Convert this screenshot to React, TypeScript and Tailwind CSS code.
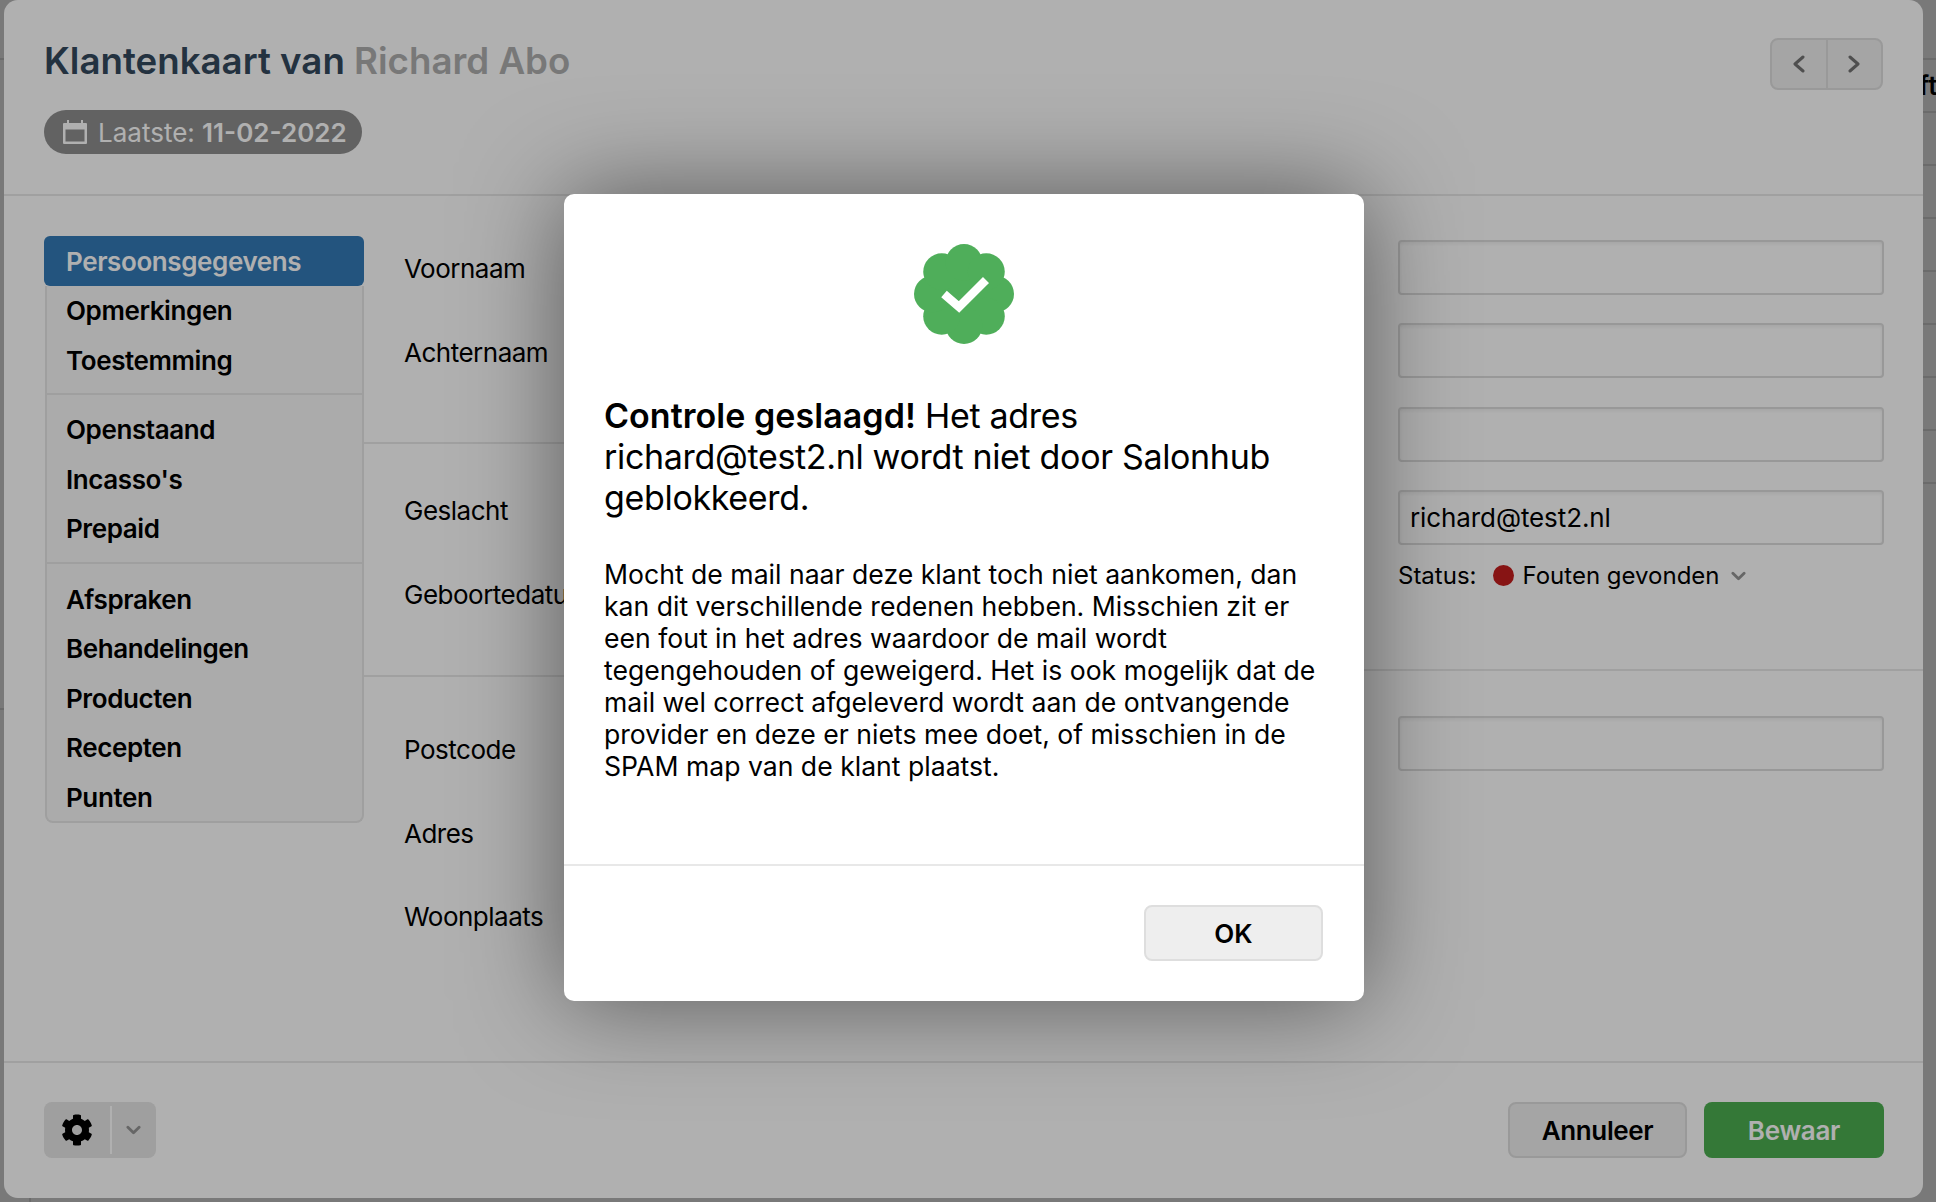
import React from 'react';
import { FaCog } from 'react-icons/fa';

const Chevron = ({ className }: { className?: string }) => (
  <svg viewBox="0 0 16 10" className={className} fill="none" stroke="currentColor" strokeWidth="3" strokeLinecap="round" strokeLinejoin="round">
    <path d="M2 2l6 6 6-6" />
  </svg>
);

const CalendarIcon = () => (
  <svg viewBox="0 0 24 24" className="h-6 w-6 text-white" fill="currentColor">
    <path d="M1 3h3V0h2v3h12V0h2v3h3a1 1 0 0 1 1 1v19a1 1 0 0 1-1 1H1a1 1 0 0 1-1-1V4a1 1 0 0 1 1-1zm1.500 6.500V21.500h19V9.500z" fillRule="evenodd" />
  </svg>
);

const Badge = () => {
  const lobes = [0, 45, 90, 135, 180, 225, 270, 315];
  return (
    <svg viewBox="-50 -50 100 100" className="h-[100px] w-[100px]">
      <g fill="#4fae5a">
        <circle r="36" />
        {lobes.map((a) => (
          <circle key={a} r="18.500" cx={31.5 * Math.cos((a * Math.PI) / 180)} cy={31.5 * Math.sin((a * Math.PI) / 180)} />
        ))}
      </g>
      <path d="M-20 0L-5 13L22 -14" fill="none" stroke="#fff" strokeWidth="8.500" />
    </svg>
  );
};

const NavItem = ({ label }: { label: string }) => (
  <div className="flex h-[49.5px] items-center px-[19px] text-[26px] font-semibold tracking-[-0.4px] text-black">{label}</div>
);

const Sidebar = () => (
  <div className="w-[320px] shrink-0">
    <div className="flex h-[50px] items-center rounded-[6px] bg-[#337ab7] px-[22px] text-[26px] font-semibold tracking-[-0.4px] text-white">Persoonsgegevens</div>
    <div className="ml-[1px] rounded-b-[8px] border-x-2 border-b-2 border-[#e6e6e6] bg-[#f8f8f8]">
      <div className="border-b-2 border-[#e6e6e6] pb-[8px]">
        <NavItem label="Opmerkingen" />
        <NavItem label="Toestemming" />
      </div>
      <div className="border-b-2 border-[#e6e6e6] pt-[10px] pb-[8px]">
        <NavItem label="Openstaand" />
        <NavItem label="Incasso's" />
        <NavItem label="Prepaid" />
      </div>
      <div className="h-[257px] pt-[11px]">
        <NavItem label="Afspraken" />
        <NavItem label="Behandelingen" />
        <NavItem label="Producten" />
        <NavItem label="Recepten" />
        <NavItem label="Punten" />
      </div>
    </div>
  </div>
);

const Label = ({ children }: { children: string }) => (
  <div className="flex h-[83.500px] items-center whitespace-nowrap pl-[40px] text-[26px] tracking-[-0.5px] text-black">{children}</div>
);

const Input = ({ value }: { value?: string }) => (
  <div className="flex h-[55px] items-center rounded-[4px] border-2 border-[#dcdcdc] px-[10px] text-[26px] tracking-[-0.1px] text-black shadow-[inset_0_2px_3px_rgba(0,0,0,0.06)]">
    {value}
  </div>
);

export default function App() {
  return (
    <div className="relative h-[1202px] w-[1936px] overflow-hidden bg-white font-[Inter,sans-serif] antialiased">
      {/* pagina achter de klantenkaart, alleen de randjes zijn zichtbaar */}
      <div className="flex h-full justify-between">
        <div className="flex w-[31px] flex-col">
          <div className="mt-[58px] h-[2px] w-full bg-[#e3e3e3]" />
          <div className="mt-[648px] h-[2px] w-full bg-[#e3e3e3]" />
          <div className="mt-auto ml-[29px] h-[5px] w-[2px] bg-[#e3e3e3]" />
        </div>
        <div className="flex w-[13px] flex-col overflow-hidden pt-[58px]">
          {Array.from({ length: 9 }).map((_, i) => (
            <div key={i} className="h-[53px] shrink-0 border-t-2 border-[#e3e3e3]">
              {i === 0 && <div className="-ml-[4px] whitespace-nowrap pt-[8px] text-[26px] leading-[36px] font-semibold text-black">ft</div>}
            </div>
          ))}
        </div>
      </div>
      <div className="absolute inset-0 bg-black/[0.31]" />

      {/* klantenkaart */}
      <div className="absolute top-0 left-[4px] flex h-[1198px] w-[1919px] flex-col rounded-[14px] bg-white">
        <div className="flex h-[196px] shrink-0 justify-between border-b-2 border-[#e8e8e8] pr-[40px] pl-[40px]">
          <div>
            <h1 className="pt-[39px] text-[36.7px] leading-[44px] font-semibold text-[#34495e]">
              Klantenkaart van <span className="text-[#aeaeae]">Richard Abo</span>
            </h1>
            <div className="mt-[27px] flex h-[44px] w-[318px] items-center gap-[11px] rounded-full bg-[#8e8e8e] pl-[19px] text-[26px] text-white">
              <CalendarIcon />
              <span>
                Laatste: <span className="font-semibold">11-02-2022</span>
              </span>
            </div>
          </div>
          <div className="mt-[38px] flex h-[52px] w-[113px] rounded-[8px] border-2 border-[#dedede] bg-[#efefef] text-[#737373]">
            <div className="flex flex-1 items-center justify-center border-r-2 border-[#dedede]">
              <svg viewBox="0 0 12 18" className="h-[18px] w-[12px]" fill="none" stroke="currentColor" strokeWidth="3" strokeLinecap="round" strokeLinejoin="round">
                <path d="M10 2L2 9l8 7" />
              </svg>
            </div>
            <div className="flex flex-1 items-center justify-center">
              <svg viewBox="0 0 12 18" className="h-[18px] w-[12px]" fill="none" stroke="currentColor" strokeWidth="3" strokeLinecap="round" strokeLinejoin="round">
                <path d="M2 2l8 7-8 7" />
              </svg>
            </div>
          </div>
        </div>

        <div className="flex flex-1 pl-[40px]">
          <div className="pt-[40px]">
            <Sidebar />
          </div>
          <div className="w-[600px] shrink-0 overflow-hidden">
            <div className="h-[248px] border-b-2 border-[#e8e8e8] pt-[31px]">
              <Label>Voornaam</Label>
              <Label>Achternaam</Label>
            </div>
            <div className="h-[233px] border-b-2 border-[#e8e8e8] pt-[25px]">
              <Label>Geslacht</Label>
              <Label>Geboortedatum</Label>
            </div>
            <div className="pt-[31px]">
              <Label>Postcode</Label>
              <Label>Adres</Label>
              <Label>Woonplaats</Label>
            </div>
          </div>
          <div className="flex-1">
            <div className="h-[475px] border-b-2 border-[#e8e8e8] pt-[44px] pr-[39.5px] pl-[434px]">
              <div className="flex flex-col gap-[28.33px]">
                <Input />
                <Input />
                <Input />
                <Input value="richard@test2.nl" />
              </div>
              <div className="mt-[17px] flex h-[28px] items-center text-[24px] text-black">
                <span>Status:</span>
                <span className="ml-[17px] h-[21px] w-[21px] rounded-full bg-[#c41e1e]" />
                <span className="ml-[8px]">Fouten gevonden</span>
                <Chevron className="ml-[11px] h-[10px] w-[15px] text-[#949494]" />
              </div>
            </div>
            <div className="pt-[45px] pr-[39.5px] pl-[434px]">
              <Input />
            </div>
          </div>
        </div>

        <div className="flex h-[137px] shrink-0 justify-between border-t-2 border-[#e8e8e8] pt-[39px] pr-[39px] pl-[40px]">
          <div className="flex h-[56px] w-[112px] items-center rounded-[8px] bg-[#e6e6e6]">
            <div className="flex w-[66px] justify-center">
              <FaCog className="h-[32px] w-[32px] text-black" />
            </div>
            <div className="h-[48px] w-[2px] bg-white" />
            <Chevron className="ml-[14px] h-[10px] w-[15px] text-[#949494]" />
          </div>
          <div className="flex gap-[17px]">
            <button className="h-[56px] w-[179px] rounded-[8px] border-2 border-[#dedede] bg-[#efefef] text-[26px] font-semibold tracking-[-0.4px] text-black">Annuleer</button>
            <button className="h-[56px] w-[180px] rounded-[8px] bg-[#4caf50] text-[26px] font-semibold tracking-[-0.3px] text-white">Bewaar</button>
          </div>
        </div>
      </div>
      <div className="absolute inset-0 bg-black/[0.31]" />

      {/* melding */}
      <div className="absolute top-[194px] left-[564px] flex h-[807px] w-[800px] flex-col rounded-[10px] bg-white shadow-[0_0_100px_rgba(0,0,0,0.5)]">
        <div className="flex-1 px-[40px] pt-[50px]">
          <div className="flex justify-center">
            <Badge />
          </div>
          <p className="mt-[51px] text-[34px] leading-[41px] tracking-[-0.33px] text-black">
            <span className="font-semibold tracking-[0.05px]">Controle geslaagd!</span> Het adres richard@test2.nl wordt niet door Salonhub geblokkeerd.
          </p>
          <p className="mt-[40px] text-[26.6px] leading-[32px] text-black">
            Mocht de mail naar deze klant toch niet aankomen, dan kan dit verschillende redenen hebben. Misschien zit er een fout in het adres waardoor de mail wordt tegengehouden of geweigerd. Het is ook mogelijk dat de mail wel correct afgeleverd wordt aan de ontvangende provider en deze er niets mee doet, of misschien in de SPAM map van de klant plaatst.
          </p>
        </div>
        <div className="flex h-[137px] shrink-0 justify-end border-t-2 border-[#e8e8e8] pt-[39px] pr-[41px]">
          <button className="h-[56px] w-[179px] rounded-[8px] border-2 border-[#dedede] bg-[#eeeeee] text-[26px] font-semibold text-black">OK</button>
        </div>
      </div>
    </div>
  );
}
